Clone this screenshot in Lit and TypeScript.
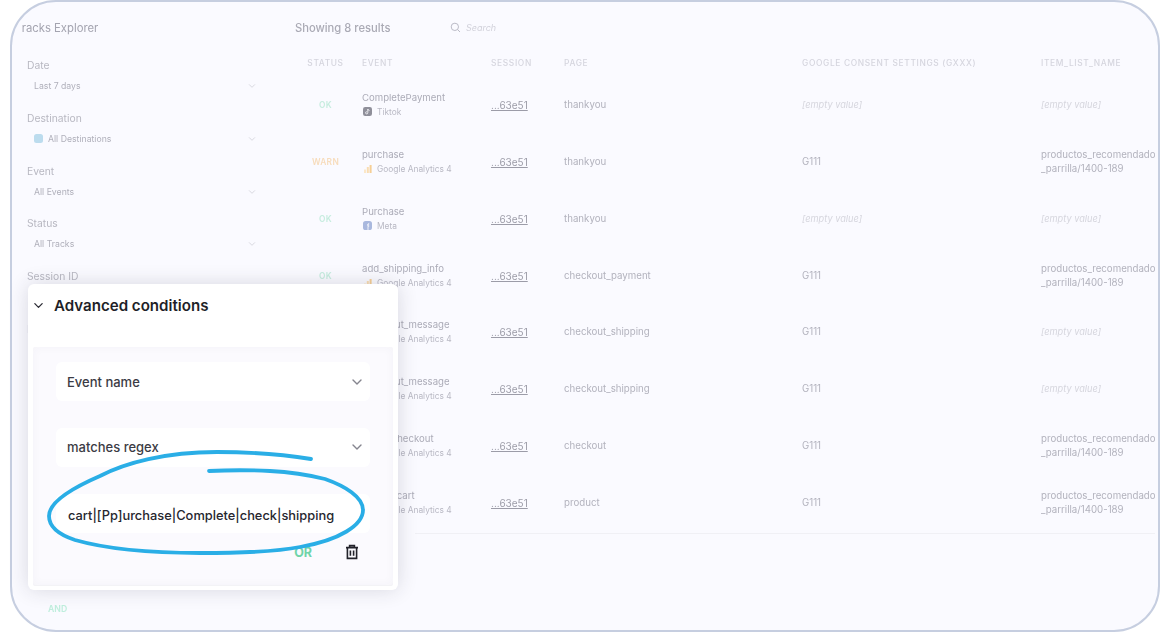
import { LitElement, html, css, svg } from "lit";
import { customElement } from "lit/decorators.js";

const chevron = (cls: string) => html`<svg class=${cls} viewBox="0 0 12 12"><path d="M2 4l4 4 4-4" fill="none" stroke="currentColor" stroke-width="1.4" stroke-linecap="round" stroke-linejoin="round"/></svg>`;

const icons: Record<string, unknown> = {
  tt: svg`<rect width="9" height="9" rx="2.2" fill="#8f8f9a"/><path d="M4.8 2v3.8a1.1 1.1 0 1 1-1-1.1M4.8 2c.2 1 .9 1.5 1.7 1.6" fill="none" stroke="#f2f2f6" stroke-width=".9"/>`,
  ga: svg`<rect x="1" y="5.5" width="2" height="3.5" fill="#fbe7c8"/><rect x="3.8" y="3" width="2" height="6" fill="#f9ddb2"/><rect x="6.6" y="1" width="2" height="8" fill="#f6cf96"/>`,
  meta: svg`<rect width="9" height="9" rx="2.6" fill="#a9b8de"/><path d="M5 9V5.2h1.2M4 3.9h2.2M5 5.2V3.6c0-.8.4-1.2 1.2-1.2" fill="none" stroke="#f5f6fb" stroke-width=".9"/>`,
};

type Row = { st: string; ev: string; ic: string; dest: string; page: string; consent: string; item: boolean };
const rows: Row[] = [
  { st: "OK", ev: "CompletePayment", ic: "tt", dest: "Tiktok", page: "thankyou", consent: "", item: false },
  { st: "WARN", ev: "purchase", ic: "ga", dest: "Google Analytics 4", page: "thankyou", consent: "G111", item: true },
  { st: "OK", ev: "Purchase", ic: "meta", dest: "Meta", page: "thankyou", consent: "", item: false },
  { st: "OK", ev: "add_shipping_info", ic: "ga", dest: "Google Analytics 4", page: "checkout_payment", consent: "G111", item: true },
  { st: "OK", ev: "checkout_message", ic: "ga", dest: "Google Analytics 4", page: "checkout_shipping", consent: "G111", item: false },
  { st: "OK", ev: "checkout_message", ic: "ga", dest: "Google Analytics 4", page: "checkout_shipping", consent: "G111", item: false },
  { st: "OK", ev: "begin_checkout", ic: "ga", dest: "Google Analytics 4", page: "checkout", consent: "G111", item: true },
  { st: "OK", ev: "add_to_cart", ic: "ga", dest: "Google Analytics 4", page: "product", consent: "G111", item: true },
];

const fields = [
  { label: "Date", value: "Last 7 days", dot: false },
  { label: "Destination", value: "All Destinations", dot: true },
  { label: "Event", value: "All Events", dot: false },
  { label: "Status", value: "All Tracks", dot: false },
  { label: "Session ID", value: "", dot: false },
  { label: "Item", value: "", dot: false },
];

@customElement("app-root")
export class AppRoot extends LitElement {
  static styles = css`
    :host { display: block; position: relative; width: 1160px; height: 632px; overflow: hidden; background: #fff; font-family: Inter, "Liberation Sans", sans-serif; }
    .frame { box-sizing: border-box; width: 1150px; height: 632px; margin-left: 10px; border: 2px solid #c6cee0; border-radius: 46px; background: #fafaff; overflow: hidden; }
    .bg { display: grid; grid-template-columns: 283px 1fr; height: 100%; filter: blur(0.5px); }
    .side { padding: 19px 0 0 15px; }
    .title { width: 80px; margin-left: -5px; overflow: hidden; white-space: nowrap; font-size: 11.3px; font-weight: 400; color: #a4a4b0; line-height: 14px; text-indent: -7px; }
    .fields { margin-top: 23px; width: 229px; }
    .field { height: 52.8px; box-sizing: border-box; }
    .field label { display: block; font-size: 10.3px; line-height: 14px; color: #b8b8c2; }
    .val { display: flex; align-items: center; gap: 5px; margin: 7px 0 0 7px; font-size: 8.7px; line-height: 14px; color: #b0b0bb; }
    .val span { flex: 1; }
    .val .c { width: 8px; height: 8px; color: #d6d6de; }
    .dot { width: 9px; height: 9px; border-radius: 2.5px; background: #bcdcee; }
    .and { margin: 228px 0 0 21px; font-size: 8.7px; font-weight: 600; line-height: 12px; color: #bfeedd; }
    .main { padding-top: 19px; }
    .top { display: flex; align-items: center; height: 14px; }
    .count { width: 155px; font-size: 11.2px; font-weight: 500; color: #aaaab5; }
    .search { display: flex; align-items: center; gap: 5px; font-size: 9px; font-style: italic; color: #d2d2db; margin-top: -1px; }
    .search svg { width: 11px; height: 11px; color: #b4b4bf; }
    .grid { display: grid; grid-template-columns: 67px 129px 73px 238px 239px 120px; margin-top: 20px; }
    .h { height: 16px; line-height: 16px; font-size: 8.4px; font-weight: 500; letter-spacing: 0.65px; color: #d5d5de; white-space: nowrap; margin-bottom: 5.5px; }
    .h.s, .stat { text-align: center; padding-right: 6px; }
    .cell { height: 56.86px; display: flex; flex-direction: column; justify-content: center; font-size: 9.7px; line-height: 14px; color: #b2b2bd; }
    .stat { font-size: 8.4px; font-weight: 600; letter-spacing: .3px; }
    .OK { color: #c6ecdf; }
    .WARN { color: #f7dcbc; }
    .name { color: #acacb8; font-size: 9.6px; }
    .sub { display: flex; align-items: center; gap: 5px; font-size: 8.4px; color: #b9b9c4; }
    .sub svg { width: 9px; height: 9px; margin-left: 1px; }
    .sess { color: #9c9ca8; text-decoration: underline; font-size: 10px; }
    .empty { font-style: italic; font-size: 9.2px; color: #d6d6de; }
    .item { white-space: nowrap; }
    .rule { height: 1px; background: #f0f0f5; margin: 1.5px 6px 0 120px; }
    .modal { position: absolute; left: 28px; top: 284px; box-sizing: border-box; width: 370px; height: 306px; background: #fff; border-radius: 6px; box-shadow: 0 0 20px rgba(40,40,60,.16); padding-top: 12px; display: flex; flex-direction: column; }
    .mh { display: flex; align-items: center; gap: 10px; height: 18px; padding-left: 5px; font-size: 15.1px; font-weight: 600; color: #1f1f28; }
    .mh svg { width: 11px; height: 11px; color: #2a2a33; }
    .panel { margin: 33px 5px 5px; flex: 1; background: #fbfafe; padding: 15px 23px 0; box-shadow: inset 0 0 10px rgba(60,60,80,.035), 0 1px 0 #f3f3f6; border-radius: 2px; }
    .sel { display: flex; align-items: center; justify-content: space-between; box-sizing: border-box; height: 39px; padding: 0 7px 0 11px; background: #fff; border-radius: 6px; font-size: 13px; font-weight: 500; color: #3b3b44; margin-bottom: 27px; }
    .sel + .sel { padding-bottom: 2px; }
    .sel svg { width: 12px; height: 12px; color: #85858e; }
    .sel.inp { color: #26262e; padding: 3px 0 0 12px; margin-bottom: 0; white-space: nowrap; font-size: 12.85px; font-weight: 500; }
    .foot { display: flex; align-items: center; justify-content: flex-end; gap: 32px; height: 20px; margin-top: 9px; padding-right: 10px; }
    .or { font-size: 12.5px; font-weight: 700; color: #6fd4a9; }
    .foot svg { width: 16px; height: 16px; color: #22222a; }
    .ink { position: absolute; left: 0; top: 0; width: 1160px; height: 632px; pointer-events: none; }
  `;

  render() {
    return html`
      <div class="frame">
        <div class="bg">
          <aside class="side">
            <div class="title">Tracks Explorer</div>
            <div class="fields">
              ${fields.map((f) => html`<div class="field"><label>${f.label}</label>
                ${f.value ? html`<div class="val">${f.dot ? html`<i class="dot"></i>` : ""}<span>${f.value}</span>${chevron("c")}</div>` : ""}</div>`)}
            </div>
            <div class="and">AND</div>
          </aside>
          <main class="main">
            <div class="top">
              <div class="count">Showing 8 results</div>
              <div class="search"><svg viewBox="0 0 12 12"><circle cx="5.3" cy="5.3" r="4" fill="none" stroke="currentColor" stroke-width="1"/><path d="M8.3 8.3l2.6 2.6" stroke="currentColor" stroke-width="1"/></svg>Search</div>
            </div>
            <div class="grid">
              <div class="h s">STATUS</div><div class="h">EVENT</div><div class="h">SESSION</div><div class="h">PAGE</div><div class="h">GOOGLE CONSENT SETTINGS (GXXX)</div><div class="h">ITEM_LIST_NAME</div>
              ${rows.map((r) => html`
                <div class="cell stat ${r.st}">${r.st}</div>
                <div class="cell"><div class="name">${r.ev}</div><div class="sub"><svg viewBox="0 0 9 9">${icons[r.ic]}</svg>${r.dest}</div></div>
                <div class="cell"><span class="sess">...63e51</span></div>
                <div class="cell">${r.page}</div>
                <div class="cell">${r.consent ? r.consent : html`<span class="empty">[empty value]</span>`}</div>
                <div class="cell item">${r.item ? html`<div>productos_recomendado</div><div>_parrilla/1400-189</div>` : html`<span class="empty">[empty value]</span>`}</div>`)}
            </div>
            <div class="rule"></div>
          </main>
        </div>
      </div>
      <section class="modal">
        <div class="mh">${chevron("")}Advanced conditions</div>
        <div class="panel">
          <div class="sel">Event name${chevron("")}</div>
          <div class="sel">matches regex${chevron("")}</div>
          <div class="sel inp">cart|[Pp]urchase|Complete|check|shipping</div>
          <div class="foot">
            <span class="or">OR</span>
            <svg viewBox="0 0 16 16" fill="none" stroke="currentColor" stroke-width="1.6"><path d="M2 3.6h12M5.6 3.4V1.6h4.8v1.8M3.4 3.8v10.6h9.2V3.8M6.4 6.4v5.4M9.6 6.4v5.4"/></svg>
          </div>
        </div>
      </section>
      <svg class="ink" viewBox="0 0 1160 632" fill="none"><path d="M311 459C280 454 250 452 217 452C165 452 125 463 100 476C70 489 49 503 49 516C49 528 60 535 75 540C110 550 160 553 200 553C240 553 275 552 300 547C340 540 363 525 363 510C363 497 345 486 325 479C305 474 290 472 270 471C250 470 230 470 209 471" stroke="#2aaee6" stroke-width="3.8" stroke-linecap="round"/></svg>
    `;
  }
}
